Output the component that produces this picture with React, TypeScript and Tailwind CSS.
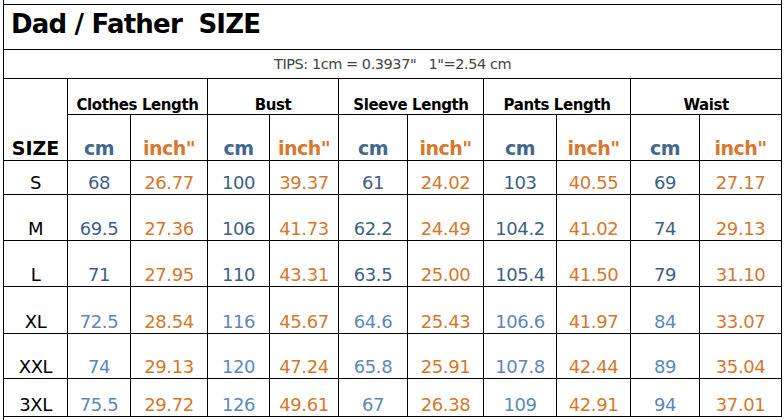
const COLS = [64, 63, 77, 62, 69, 69, 76, 73, 74, 69, 82];

const GROUPS = ['Clothes Length', 'Bust', 'Sleeve Length', 'Pants Length', 'Waist'];

type Row = { size: string; h: string; vals: string[]; light: boolean };

const ROWS: Row[] = [
  { size: 'S', h: 'h-[34px]', light: false, vals: ['68', '26.77', '100', '39.37', '61', '24.02', '103', '40.55', '69', '27.17'] },
  { size: 'M', h: 'h-[46px]', light: false, vals: ['69.5', '27.36', '106', '41.73', '62.2', '24.49', '104.2', '41.02', '74', '29.13'] },
  { size: 'L', h: 'h-[46px]', light: false, vals: ['71', '27.95', '110', '43.31', '63.5', '25.00', '105.4', '41.50', '79', '31.10'] },
  { size: 'XL', h: 'h-[47px]', light: true, vals: ['72.5', '28.54', '116', '45.67', '64.6', '25.43', '106.6', '41.97', '84', '33.07'] },
  { size: 'XXL', h: 'h-[45px]', light: true, vals: ['74', '29.13', '120', '47.24', '65.8', '25.91', '107.8', '42.44', '89', '35.04'] },
  { size: '3XL', h: 'h-[38px]', light: true, vals: ['75.5', '29.72', '126', '49.61', '67', '26.38', '109', '42.91', '94', '37.01'] },
];

const cell = 'border border-black p-0 text-center align-bottom';

export default function App() {
  return (
    <div className="w-[784px] h-[420px] overflow-hidden bg-white pl-[3px] font-['DejaVu_Sans',sans-serif]">
      <table className="table-fixed border-collapse w-[779px]">
        <colgroup>
          {COLS.map((w, i) => (
            <col key={i} style={{ width: w }} />
          ))}
        </colgroup>
        <tbody>
          <tr className="h-[4px]">
            <td colSpan={11} className="border-x border-black p-0" />
          </tr>
          <tr className="h-[44px]">
            <td
              colSpan={11}
              className="border border-black pl-[7px] pb-[5px] align-middle text-left text-[26px] font-bold tracking-[-0.8px] text-black"
            >
              Dad / Father&nbsp; SIZE
            </td>
          </tr>
          <tr className="h-[29px]">
            <td colSpan={11} className="border border-black p-0 pb-[2px] text-center align-bottom text-[14.5px] tracking-[-0.45px] text-[#444]">
              TIPS: 1cm = 0.3937"&nbsp;&nbsp; 1"=2.54 cm
            </td>
          </tr>
          <tr className="h-[36px]">
            <td rowSpan={2} className={`${cell} text-[19px] font-bold text-black leading-[1.2]`}>
              SIZE
            </td>
            {GROUPS.map((g) => (
              <td key={g} colSpan={2} className={`${cell} text-[15px] font-bold tracking-[-0.4px] text-black leading-[1.2]`}>
                {g}
              </td>
            ))}
          </tr>
          <tr className="h-[46px]">
            {GROUPS.map((g) => [
              <td key={g + 'cm'} className={`${cell} text-[19px] font-bold tracking-[-0.5px] text-[#44678f] leading-[1.2]`}>
                cm
              </td>,
              <td key={g + 'in'} className={`${cell} text-[19px] font-bold tracking-[-0.5px] text-[#d8782e] leading-[1.2]`}>
                inch"
              </td>,
            ])}
          </tr>
          {ROWS.map((r) => (
            <tr key={r.size} className={r.h}>
              <td className={`${cell} text-[18px] tracking-[-0.4px] text-black leading-[1.2]`}>{r.size}</td>
              {r.vals.map((v, i) => (
                <td
                  key={i}
                  className={`${cell} text-[18px] tracking-[-0.4px] leading-[1.2] ${
                    i % 2 === 1 ? 'text-[#d5782e]' : r.light ? 'text-[#5d87bd]' : 'text-[#3e5f85]'
                  }`}
                >
                  {v}
                </td>
              ))}
            </tr>
          ))}
          <tr className="h-[10px]">
            <td colSpan={11} className="border-l border-t border-black p-0" />
          </tr>
        </tbody>
      </table>
    </div>
  );
}
